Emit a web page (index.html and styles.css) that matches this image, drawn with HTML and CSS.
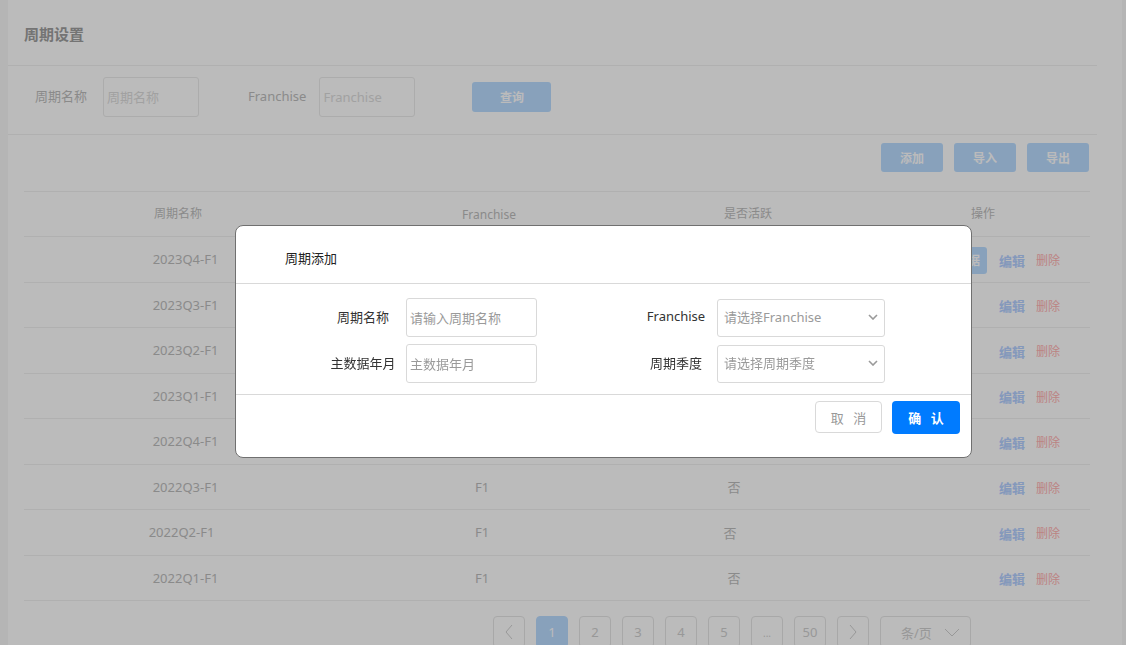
FILE: index.html
```html
<!DOCTYPE html>
<html lang="zh-CN">
<head>
<meta charset="utf-8">
<title>周期设置</title>
<link rel="stylesheet" href="styles.css">
</head>
<body>
<div class="app">
  <div class="page">
    <h1 class="page-title">周期设置</h1>

    <div class="search-bar">
      <span class="search-label">周期名称</span>
      <input class="search-input" type="text" placeholder="周期名称">
      <span class="search-label search-label--second">Franchise</span>
      <input class="search-input" type="text" placeholder="Franchise">
      <button class="btn btn-primary btn-query">查询</button>
    </div>

    <div class="toolbar">
      <button class="btn btn-primary btn-tool">添加</button>
      <button class="btn btn-primary btn-tool">导入</button>
      <button class="btn btn-primary btn-tool">导出</button>
    </div>

    <div class="table">
      <div class="tr thead">
        <div class="td c-name">周期名称</div>
        <div class="td c-fr">Franchise</div>
        <div class="td c-act">是否活跃</div>
        <div class="td th-op">操作</div>
      </div>
      <div class="tr">
        <div class="td c-name">2023Q4-F1</div>
        <div class="td c-fr">F1</div>
        <div class="td c-act">是</div>
        <div class="td c-op"><button class="btn btn-primary btn-row">查看数据</button><a class="link link-edit">编辑</a><a class="link link-del">删除</a></div>
      </div>
      <div class="tr">
        <div class="td c-name">2023Q3-F1</div>
        <div class="td c-fr">F1</div>
        <div class="td c-act">否</div>
        <div class="td c-op"><a class="link link-edit">编辑</a><a class="link link-del">删除</a></div>
      </div>
      <div class="tr">
        <div class="td c-name">2023Q2-F1</div>
        <div class="td c-fr">F1</div>
        <div class="td c-act">否</div>
        <div class="td c-op"><a class="link link-edit">编辑</a><a class="link link-del">删除</a></div>
      </div>
      <div class="tr">
        <div class="td c-name">2023Q1-F1</div>
        <div class="td c-fr">F1</div>
        <div class="td c-act">否</div>
        <div class="td c-op"><a class="link link-edit">编辑</a><a class="link link-del">删除</a></div>
      </div>
      <div class="tr">
        <div class="td c-name">2022Q4-F1</div>
        <div class="td c-fr">F1</div>
        <div class="td c-act">否</div>
        <div class="td c-op"><a class="link link-edit">编辑</a><a class="link link-del">删除</a></div>
      </div>
      <div class="tr">
        <div class="td c-name">2022Q3-F1</div>
        <div class="td c-fr">F1</div>
        <div class="td c-act">否</div>
        <div class="td c-op"><a class="link link-edit">编辑</a><a class="link link-del">删除</a></div>
      </div>
      <div class="tr tr-shift">
        <div class="td c-name">2022Q2-F1</div>
        <div class="td c-fr">F1</div>
        <div class="td c-act">否</div>
        <div class="td c-op"><a class="link link-edit">编辑</a><a class="link link-del">删除</a></div>
      </div>
      <div class="tr">
        <div class="td c-name">2022Q1-F1</div>
        <div class="td c-fr">F1</div>
        <div class="td c-act">否</div>
        <div class="td c-op"><a class="link link-edit">编辑</a><a class="link link-del">删除</a></div>
      </div>
    </div>

    <div class="pagination">
      <span class="pg-btn"><svg width="10" height="16" viewBox="0 0 10 16"><path d="M8 1 L2 8 L8 15" fill="none" stroke="currentColor" stroke-width="1"/></svg></span>
      <span class="pg-btn pg-active">1</span>
      <span class="pg-btn">2</span>
      <span class="pg-btn">3</span>
      <span class="pg-btn">4</span>
      <span class="pg-btn">5</span>
      <span class="pg-btn pg-dots">...</span>
      <span class="pg-btn">50</span>
      <span class="pg-btn"><svg width="10" height="16" viewBox="0 0 10 16"><path d="M2 1 L8 8 L2 15" fill="none" stroke="currentColor" stroke-width="1"/></svg></span>
      <span class="pg-size">条/页<svg width="16" height="9" viewBox="0 0 16 9"><path d="M1 1 L8 8 L15 1" fill="none" stroke="currentColor" stroke-width="1"/></svg></span>
    </div>
  </div>
</div>

<div class="mask"></div>

<div class="modal">
  <div class="modal-header">周期添加</div>
  <div class="modal-body">
    <div class="form-row">
      <div class="field">
        <span class="field-label field-label--left">周期名称</span>
        <input class="field-input" type="text" placeholder="请输入周期名称">
      </div>
      <div class="field field--right">
        <span class="field-label field-label--right">Franchise</span>
        <div class="field-select">
          <span class="select-ph">请选择Franchise</span>
          <svg class="chev" width="10" height="6" viewBox="0 0 10 6"><path d="M1 1 L5 5 L9 1" fill="none" stroke="currentColor" stroke-width="1.6"/></svg>
        </div>
      </div>
    </div>
    <div class="form-row">
      <div class="field">
        <span class="field-label field-label--left">主数据年月</span>
        <input class="field-input" type="text" placeholder="主数据年月">
      </div>
      <div class="field field--right">
        <span class="field-label field-label--right">周期季度</span>
        <div class="field-select">
          <span class="select-ph">请选择周期季度</span>
          <svg class="chev" width="10" height="6" viewBox="0 0 10 6"><path d="M1 1 L5 5 L9 1" fill="none" stroke="currentColor" stroke-width="1.6"/></svg>
        </div>
      </div>
    </div>
  </div>
  <div class="modal-footer">
    <button class="btn btn-cancel">取 消</button>
    <button class="btn btn-confirm">确 认</button>
  </div>
</div>
</body>
</html>
```

FILE: styles.css
```css
* { box-sizing: border-box; }

html, body {
  margin: 0;
  padding: 0;
  height: 100%;
}

body {
  background: #f7f7f7;
  font-family: "Noto Sans", "Noto Sans CJK SC", sans-serif;
  font-size: 13px;
  color: #bdbdbd;
  overflow: hidden;
}

.app {
  margin: 0 4px 0 8px;
  height: 100%;
  background: #ffffff;
}

.page {
  width: 1089px;
}

/* title */
.page-title {
  margin: 0;
  padding: 19px 16px 16px;
  line-height: 30px;
  font-size: 15px;
  font-weight: bold;
  color: #9e9e9e;
  border-bottom: 1px solid #f0f0f0;
}

/* search */
.search-bar {
  display: flex;
  align-items: flex-start;
  height: 69px;
  padding: 11px 0 0 27px;
  border-bottom: 1px solid #f0f0f0;
}

.search-label {
  line-height: 39px;
  font-size: 13px;
  color: #bdbdbd;
  margin-right: 16px;
}

.search-label--second {
  margin-left: 49px;
  margin-right: 13px;
}

.search-input {
  width: 96px;
  height: 40px;
  border: 1px solid #ebebeb;
  border-radius: 3px;
  padding: 0 3px;
  font: inherit;
  font-size: 13px;
  color: #bdbdbd;
  background: #fff;
  outline: none;
}

.search-input::placeholder { color: #dcdcdc; }

.btn {
  border: none;
  font-family: inherit;
  cursor: pointer;
  padding: 0;
}

.btn-primary {
  background: #badcff;
  color: #ffffff;
  font-weight: bold;
  font-size: 12px;
  border-radius: 3px;
}

.btn-query {
  width: 79px;
  height: 30px;
  margin: 5px 0 0 57px;
}

/* toolbar */
.toolbar {
  display: flex;
  justify-content: flex-end;
  gap: 11px;
  padding: 8px 8px 19px 0;
}

.btn-tool {
  width: 62px;
  height: 29px;
}

/* table */
.table {
  margin-left: 16px;
  width: 1066px;
  border-top: 1px solid #f0f0f0;
}

.tr {
  display: grid;
  grid-template-columns: 323px 284px 234px 225px;
  height: 45.5px;
  align-items: center;
  border-bottom: 1px solid #f0f0f0;
  color: #bdbdbd;
}

.thead {
  height: 45px;
  font-size: 12px;
  padding-bottom: 3px;
}

.td {
  text-align: center;
  white-space: nowrap;
}

.c-fr { padding-right: 14px; }
.c-act { padding-right: 28px; }

.thead .c-name { padding-right: 15px; }
.thead .c-fr { padding-right: 0; padding-top: 4px; }
.thead .c-act { padding-right: 0; }
.th-op { padding-left: 11px; }

.tr-shift .c-name { padding-right: 8px; }
.tr-shift .c-act { padding-right: 36px; }

.c-op {
  display: flex;
  justify-content: flex-end;
  align-items: center;
  padding-right: 30px;
  padding-top: 2px;
}

.btn-row {
  width: 62px;
  height: 27px;
  margin-right: 12px;
  font-size: 12px;
}

.link {
  font-size: 13px;
  text-decoration: none;
}

.link-edit { color: #b4d0ff; font-weight: bold; margin-right: 11px; }
.link-del { color: #ffb3b3; font-size: 12px; }

/* pagination */
.pagination {
  display: flex;
  justify-content: flex-end;
  gap: 11px;
  margin-top: 15px;
  padding-right: 126px;
}

.pg-btn {
  width: 32px;
  height: 32px;
  border: 1px solid #e6e6e6;
  border-radius: 4px;
  display: flex;
  align-items: center;
  justify-content: center;
  font-size: 13px;
  color: #d0d0d0;
}

.pg-active {
  background: #badcff;
  border-color: #badcff;
  color: #ffffff;
}

.pg-dots { font-size: 10px; padding-top: 2px; }

.pg-size {
  width: 91px;
  height: 32px;
  border: 1px solid #e6e6e6;
  border-radius: 4px;
  display: flex;
  align-items: center;
  justify-content: space-between;
  padding: 0 10px 0 20px;
  font-size: 13px;
  color: #d0d0d0;
}

/* mask + modal */
.mask {
  position: fixed;
  inset: 0;
  background: rgba(0, 0, 0, 0.267);
}

.modal {
  position: fixed;
  left: 235px;
  top: 225px;
  width: 737px;
  height: 233px;
  background: #ffffff;
  border: 1px solid #707070;
  border-radius: 8px;
  color: #333;
  font-family: "Noto Sans", "Noto Sans CJK SC", sans-serif;
}

.modal-header {
  height: 58px;
  padding: 0 0 0 49px;
  line-height: 64px;
  font-size: 13px;
  color: #222;
  border-bottom: 1px solid #d9d9d9;
}

.modal-body {
  padding: 14px 0 11px 90px;
  border-bottom: 1px solid #d9d9d9;
  display: flex;
  flex-direction: column;
  gap: 7px;
}

.form-row {
  display: flex;
  align-items: center;
}

.field {
  display: flex;
  align-items: center;
}

.field--right { margin-left: 103px; }

.field-label {
  text-align: center;
  font-size: 13px;
  color: #333;
  padding-bottom: 3px;
}

.field-label--left { width: 74px; margin-right: 6px; }
.field-label--right { width: 72px; margin-right: 5px; }

.field-input {
  width: 131px;
  height: 39px;
  border: 1px solid #d9d9d9;
  border-radius: 3px;
  padding: 0 3px;
  font: inherit;
  font-size: 13px;
  outline: none;
}

.field-input::placeholder { color: #9a9a9a; }

.field-select {
  width: 168px;
  height: 38px;
  border: 1px solid #d9d9d9;
  border-radius: 3px;
  display: flex;
  align-items: center;
  justify-content: space-between;
  padding: 0 6px 2px 6px;
  font-size: 13px;
}

.select-ph { color: #9a9a9a; }
.chev { color: #9a9a9a; }

.modal-footer {
  display: flex;
  justify-content: flex-end;
  gap: 10px;
  padding: 6px 11px 0 0;
}

.btn-cancel {
  width: 67px;
  height: 32px;
  background: #fff;
  border: 1px solid #d9d9d9;
  border-radius: 4px;
  color: #999;
  font-size: 13px;
  letter-spacing: 3px;
  text-indent: 3px;
}

.btn-confirm {
  width: 68px;
  height: 33px;
  background: #007bff;
  border-radius: 4px;
  color: #fff;
  font-weight: bold;
  font-size: 13px;
  letter-spacing: 3px;
  text-indent: 3px;
}
```
